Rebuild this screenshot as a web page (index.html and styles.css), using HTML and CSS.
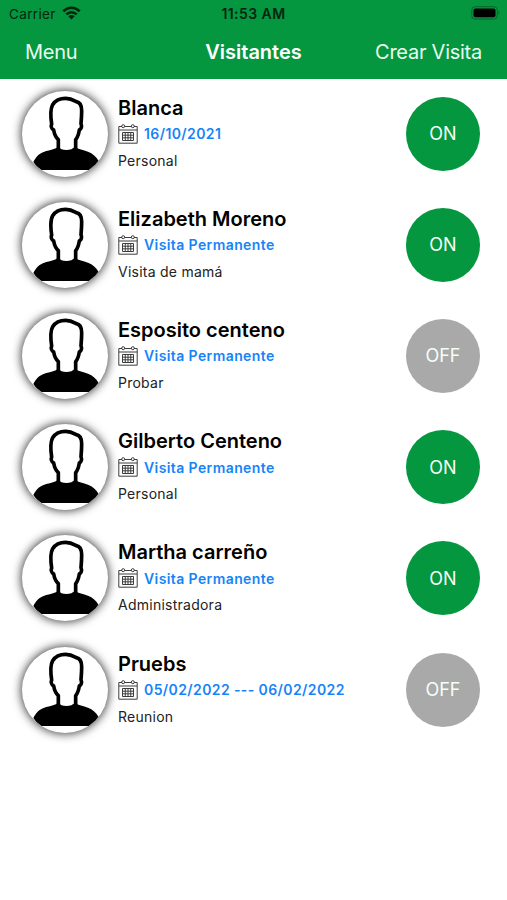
FILE: index.html
```
<!DOCTYPE html>
<html lang="es">
<head>
    <meta charset="utf-8">
    <meta name="viewport" content="width=device-width, initial-scale=1">
    <title>Visitantes</title>
    <link rel="stylesheet" href="styles.css">
</head>
<body>
    <!-- Shared icons -->
    <svg class="icons">
        <symbol id="person" viewBox="35 33 258 258">
            <path d="M144 210V179C136 172 132 161 130 150C124 147 121 139 124 132C121 112 120 87 127 74C136 60 149 55 166 55C181 55 189 60 198 65C209 67 214 77 214 92C214 107 213 119 212 131C215 139 213 147 207 150C205 162 202 172 196 179V210" fill="#fff" stroke="#000" stroke-width="11" stroke-linejoin="round"/>
            <path d="M69 246C79 226 91 218 108 213C122 209 136 207 143 200C149 206 157 210 168 210C179 210 188 206 194 200C204 208 219 209 233 215C247 220 258 230 265 243C258 255 250 263 241 270H93C83 264 75 256 69 246Z" fill="#000"/>
        </symbol>
        <symbol id="calendar" viewBox="0 0 20 20">
            <g fill="none" stroke="#3c3c3c">
                <path d="M4 2.5H.8V19.2H19.2V2.5H16M6.500 2.500H13.500M.8 6H19.200"/>
                <path d="M4.500 8.500H15.500V16.500H4.500ZM4.500 11.200H15.500M4.500 13.800H15.500M7.250 8.500V16.500M10 8.500V16.500M12.750 8.500V16.500"/>
                <circle cx="5.200" cy="2.200" r="1.500"/>
                <circle cx="14.800" cy="2.200" r="1.500"/>
            </g>
        </symbol>
    </svg>

    <header class="header">
        <div class="status-bar">
            <div class="carrier">
                <span>Carrier</span>
                <svg class="wifi" viewBox="0 0 18 14">
                    <g fill="none" stroke="#06250f" stroke-width="2.600">
                        <path d="M.8 5.200C5.500 .6 12.500 .6 17.200 5.200"/>
                        <path d="M3.800 8.400C6.800 5.500 11.200 5.500 14.200 8.400"/>
                    </g>
                    <path d="M5.800 10.300C7.700 8.500 10.300 8.500 12.200 10.300L9 13.500Z" fill="#06250f"/>
                </svg>
            </div>
            <span class="time">11:53 AM</span>
            <svg class="battery" viewBox="0 0 30 14">
                <rect x=".7" y=".7" width="25.600" height="12.300" rx="3.500" fill="none" stroke="#04662a"/>
                <rect x="2.500" y="2.500" width="22" height="8.700" rx="2" fill="#000"/>
                <path d="M27.500 4.800Q29.500 6.800 27.500 8.800Z" fill="#04662a"/>
            </svg>
        </div>
        <nav class="navbar">
            <a class="menu">Menu</a>
            <h1 class="title">Visitantes</h1>
            <a class="create">Crear Visita</a>
        </nav>
    </header>

    <main class="visits">
        <div class="visit">
            <svg class="avatar"><use href="#person"/></svg>
            <div class="info">
                <h2 class="name">Blanca</h2>
                <div class="date"><svg class="calendar"><use href="#calendar"/></svg><span>16/10/2021</span></div>
                <p class="reason">Personal</p>
            </div>
            <button class="toggle on">ON</button>
        </div>
        <div class="visit">
            <svg class="avatar"><use href="#person"/></svg>
            <div class="info">
                <h2 class="name">Elizabeth Moreno</h2>
                <div class="date"><svg class="calendar"><use href="#calendar"/></svg><span>Visita Permanente</span></div>
                <p class="reason">Visita de mamá</p>
            </div>
            <button class="toggle on">ON</button>
        </div>
        <div class="visit">
            <svg class="avatar"><use href="#person"/></svg>
            <div class="info">
                <h2 class="name">Esposito centeno</h2>
                <div class="date"><svg class="calendar"><use href="#calendar"/></svg><span>Visita Permanente</span></div>
                <p class="reason">Probar</p>
            </div>
            <button class="toggle">OFF</button>
        </div>
        <div class="visit">
            <svg class="avatar"><use href="#person"/></svg>
            <div class="info">
                <h2 class="name">Gilberto Centeno</h2>
                <div class="date"><svg class="calendar"><use href="#calendar"/></svg><span>Visita Permanente</span></div>
                <p class="reason">Personal</p>
            </div>
            <button class="toggle on">ON</button>
        </div>
        <div class="visit">
            <svg class="avatar"><use href="#person"/></svg>
            <div class="info">
                <h2 class="name">Martha carreño</h2>
                <div class="date"><svg class="calendar"><use href="#calendar"/></svg><span>Visita Permanente</span></div>
                <p class="reason">Administradora</p>
            </div>
            <button class="toggle on">ON</button>
        </div>
        <div class="visit">
            <svg class="avatar"><use href="#person"/></svg>
            <div class="info">
                <h2 class="name">Pruebs</h2>
                <div class="date"><svg class="calendar"><use href="#calendar"/></svg><span>05/02/2022 --- 06/02/2022</span></div>
                <p class="reason">Reunion</p>
            </div>
            <button class="toggle">OFF</button>
        </div>
    </main>
</body>
</html>
```

FILE: styles.css
```
* {
    box-sizing: border-box;
}

body {
    margin: 0;
    min-height: 100vh;
    background-color: #fff;
    font-family: Inter, "Liberation Sans", sans-serif;
    color: #000;
}

.icons {
    display: none;
}

.header {
    height: 79px;
    background-color: #04973f;
}

.status-bar {
    display: grid;
    grid-template-columns: 1fr auto 1fr;
    align-items: center;
    height: 27px;
    padding: 0 6px 0 9px;
    font-size: 13px;
    color: #06250f;
}

.carrier {
    display: flex;
    align-items: center;
    gap: 6px;
    font-size: 13.5px;
    letter-spacing: 0.35px;
}

.wifi {
    width: 19px;
    height: 14px;
    margin-top: -2px;
}

.time {
    margin-right: 3px;
    font-size: 14px;
    font-weight: 600;
    letter-spacing: 0.45px;
}

.battery {
    width: 30px;
    height: 14px;
    margin-top: -1px;
    justify-self: end;
}

.navbar {
    display: grid;
    grid-template-columns: 1fr auto 1fr;
    align-items: center;
    height: 50px;
    padding: 0 25px;
    font-size: 20px;
    letter-spacing: -0.25px;
    color: #e9fbef;
}

.title {
    margin: 0;
    font-size: 20px;
    font-weight: 600;
    letter-spacing: 0;
    color: #fff;
}

.create {
    text-align: right;
}

.visit {
    display: flex;
    align-items: center;
    height: 111.2px;
    padding: 0 27px 2px 22px;
}

.avatar {
    width: 86px;
    height: 86px;
    flex-shrink: 0;
    border-radius: 50%;
    background-color: #fff;
    box-shadow: 0 0 10px 1px rgba(0, 0, 0, 0.75);
}

.info {
    flex: 1;
    margin-left: 10px;
    padding-top: 2px;
}

.name {
    margin: 0;
    font-size: 20px;
    font-weight: 600;
    line-height: 26px;
}

.date {
    display: flex;
    align-items: center;
    gap: 6px;
    height: 26px;
    font-size: 14px;
    font-weight: 600;
    letter-spacing: 0.4px;
    color: #1684f8;
}

.calendar {
    width: 20px;
    height: 20px;
}

.reason {
    margin: 0;
    font-size: 14px;
    line-height: 28px;
    letter-spacing: 0.25px;
    color: #222;
}

.toggle {
    width: 74px;
    height: 74px;
    padding: 0;
    border: none;
    border-radius: 50%;
    background-color: #a9a9a9;
    color: #f4fff7;
    font-family: inherit;
    font-size: 18px;
}

.toggle.on {
    background-color: #04973f;
}
```
